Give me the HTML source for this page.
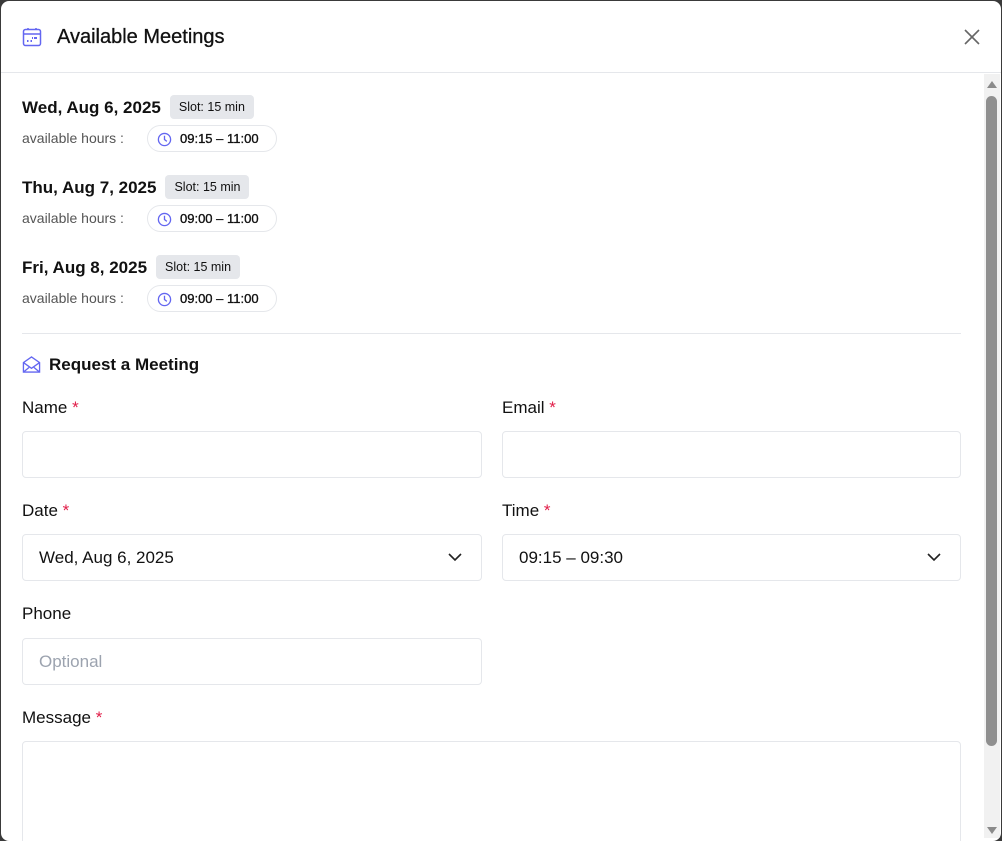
<!DOCTYPE html>
<html><head><style>
*{box-sizing:border-box;margin:0;padding:0}
body{width:1002px;height:837px;overflow:hidden;background:#3a3a3a;font-family:"Liberation Sans",Roboto,sans-serif;color:#111;position:relative}
.modal{position:absolute;left:1px;top:1px;width:1000px;height:840px;background:#fff;border-radius:8px;overflow:hidden}
.hdr{height:72px;border-bottom:1px solid #e5e7eb;position:relative}
.hdr h1{position:absolute;left:56px;top:25px;font-size:20px;font-weight:400;color:#111;-webkit-text-stroke:.3px #111}
.ico{position:absolute}
.day{position:absolute;left:21px;font-size:17px;font-weight:700}
.slot{display:inline-block;background:#e5e7eb;border-radius:4px;font-size:12.5px;font-weight:400;padding:5px 9px;margin-left:9px;vertical-align:2px}
.av{position:absolute;left:21px;font-size:14px;color:#555}
.pill{position:absolute;left:146px;height:27px;width:130px;border:1px solid #e5e7eb;border-radius:14px;font-size:13px;color:#111;padding:5px 0 0 32px;-webkit-text-stroke:.35px #111}
.pill svg{position:absolute;left:9px;top:6px}
.hr{position:absolute;left:21px;width:939px;top:332px;border-top:1px solid #e5e7eb}
.lbl{position:absolute;font-size:17px;color:#111}
.lbl b{color:#e11d48;font-weight:400}
.in{position:absolute;border:1px solid #e5e7eb;border-radius:4px;height:47px;font-size:17px;padding:13px 16px;color:#111}
.sb{position:absolute;left:983px;top:73px;width:16px;height:764px;background:#f1f1f1}
</style></head><body>
<div class="modal">
<div class="hdr">
<svg class="ico" style="left:21px;top:26px" width="20" height="20" viewBox="0 0 20 20" fill="none" stroke="#6366f1" stroke-width="1.5"><rect x="1.5" y="2.5" width="17" height="16" rx="2"/><line x1="1.5" y1="7" x2="18.5" y2="7"/><line x1="6" y1="1" x2="6" y2="3"/><line x1="14" y1="1" x2="14" y2="3"/><g stroke-width="2"><line x1="5" y1="14" x2="6.5" y2="14"/><line x1="8.5" y1="14" x2="10" y2="14"/><line x1="12" y1="11" x2="15" y2="11"/><line x1="10" y1="11" x2="11" y2="11"/></g></svg>
<h1>Available Meetings</h1>
<svg class="ico" style="left:963px;top:28px" width="16" height="16" viewBox="0 0 16 16" stroke="#666" stroke-width="1.6"><line x1="1" y1="1" x2="15" y2="15"/><line x1="15" y1="1" x2="1" y2="15"/></svg>
</div>
<div class="day" style="top:94px">Wed, Aug 6, 2025<span class="slot">Slot: 15 min</span></div>
<div class="av" style="top:129px">available hours :</div>
<div class="pill" style="top:124px"><svg width="15" height="15" viewBox="0 0 16 16" fill="none" stroke="#6366f1" stroke-width="1.4"><circle cx="8" cy="8" r="6.5"/><path d="M8 4v4l2.5 2"/></svg>09:15 – 11:00</div>
<div class="day" style="top:174px">Thu, Aug 7, 2025<span class="slot">Slot: 15 min</span></div>
<div class="av" style="top:209px">available hours :</div>
<div class="pill" style="top:204px"><svg width="15" height="15" viewBox="0 0 16 16" fill="none" stroke="#6366f1" stroke-width="1.4"><circle cx="8" cy="8" r="6.5"/><path d="M8 4v4l2.5 2"/></svg>09:00 – 11:00</div>
<div class="day" style="top:254px">Fri, Aug 8, 2025<span class="slot">Slot: 15 min</span></div>
<div class="av" style="top:289px">available hours :</div>
<div class="pill" style="top:284px"><svg width="15" height="15" viewBox="0 0 16 16" fill="none" stroke="#6366f1" stroke-width="1.4"><circle cx="8" cy="8" r="6.5"/><path d="M8 4v4l2.5 2"/></svg>09:00 – 11:00</div>
<div class="hr"></div>
<svg class="ico" style="left:21px;top:354px" width="19" height="19" viewBox="0 0 20 20" fill="none" stroke="#6366f1" stroke-width="1.4"><path d="M1.5 8v10h17V8L10 2z"/><path d="M1.5 8l8.5 6 8.5-6"/><path d="M1.5 18l6-5M18.5 18l-6-5"/></svg>
<div class="lbl" style="left:48px;top:354px;font-weight:700">Request a Meeting</div>
<div class="lbl" style="left:21px;top:397px">Name <b>*</b></div>
<div class="lbl" style="left:501px;top:397px">Email <b>*</b></div>
<div class="in" style="left:21px;top:430px;width:460px"></div>
<div class="in" style="left:501px;top:430px;width:459px"></div>
<div class="lbl" style="left:21px;top:500px">Date <b>*</b></div>
<div class="lbl" style="left:501px;top:500px">Time <b>*</b></div>
<div class="in" style="left:21px;top:533px;width:460px">Wed, Aug 6, 2025<svg style="position:absolute;right:19px;top:18px" width="14" height="9" viewBox="0 0 14 9" fill="none" stroke="#222" stroke-width="1.6"><path d="M1 1l6 6 6-6"/></svg></div>
<div class="in" style="left:501px;top:533px;width:459px">09:15 – 09:30<svg style="position:absolute;right:19px;top:18px" width="14" height="9" viewBox="0 0 14 9" fill="none" stroke="#222" stroke-width="1.6"><path d="M1 1l6 6 6-6"/></svg></div>
<div class="lbl" style="left:21px;top:603px">Phone</div>
<div class="in" style="left:21px;top:637px;width:460px;color:#9ca3af">Optional</div>
<div class="lbl" style="left:21px;top:707px">Message <b>*</b></div>
<div class="in" style="left:21px;top:740px;width:939px;height:110px"></div>
<div class="sb">
<svg style="position:absolute;left:2px;top:6px" width="12" height="9"><path d="M6 1L11 8H1z" fill="#8a8a8a"/></svg>
<div style="position:absolute;left:2px;top:22px;width:11px;height:650px;background:#8f8f8f;border-radius:6px"></div>
<svg style="position:absolute;left:2px;top:752px" width="12" height="9"><path d="M1 1H11L6 8z" fill="#8a8a8a"/></svg>
</div>
</div>
</body></html>
